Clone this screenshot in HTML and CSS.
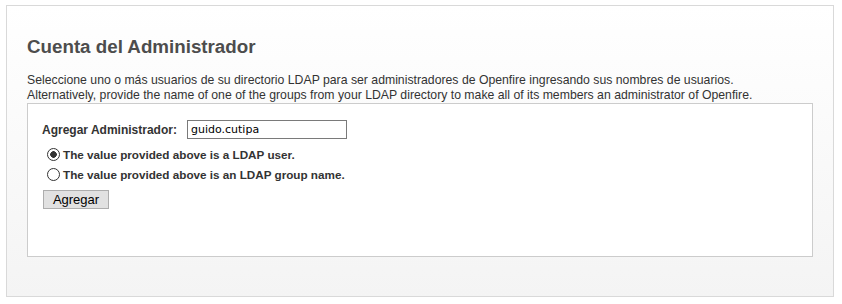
FILE: index.html
```html
<!DOCTYPE html>
<html lang="es">
<head>
    <meta charset="UTF-8">
    <title>Cuenta del Administrador</title>
    <link rel="stylesheet" href="styles.css">
</head>
<body>

    <div class="panel">
        <h1>Cuenta del Administrador</h1>
        <p class="intro">
            Seleccione uno o más usuarios de su directorio LDAP para ser administradores de Openfire ingresando sus nombres de usuarios.<br>
            Alternatively, provide the name of one of the groups from your LDAP directory to make all of its members an administrator of Openfire.
        </p>

        <div class="form-box">
            <div class="field-row">
                <label for="admin" class="field-label">Agregar Administrador:</label>
                <input type="text" id="admin" value="guido.cutipa">
            </div>
            <label class="radio-row">
                <input type="radio" name="type" value="user" checked>
                <span>The value provided above is a LDAP user.</span>
            </label>
            <label class="radio-row">
                <input type="radio" name="type" value="group">
                <span>The value provided above is an LDAP group name.</span>
            </label>
            <button type="button">Agregar</button>
        </div>
    </div>

</body>
</html>
```

FILE: styles.css
```css
body {
    margin: 0;
    background-color: #ffffff;
    font-family: "Liberation Sans", Arial, sans-serif;
    color: #333333;
}
.panel {
    box-sizing: border-box;
    height: 292px;
    margin: 5px 8px 0 6px;
    padding: 0 20px;
    border: 1px solid #d9d9d9;
    background: linear-gradient(#ffffff, #f4f4f4);
}
h1 {
    margin: 30px 0 0;
    font-size: 18.75px;
    line-height: 22px;
    font-weight: bold;
    color: #4d4d4d;
}
.intro {
    margin: 15px 0 0;
    font-size: 12.25px;
    line-height: 15px;
}
.form-box {
    display: flex;
    flex-direction: column;
    align-items: flex-start;
    margin-top: 0;
    padding: 16px 14px 47px;
    background-color: #ffffff;
    border: 1px solid #cccccc;
}
.field-row {
    display: flex;
    align-items: center;
    height: 19px;
}
.field-label {
    width: 145px;
    font-size: 12px;
    font-weight: bold;
    color: #333333;
}
.field-row input {
    box-sizing: border-box;
    width: 160px;
    height: 19px;
    margin: 0;
    padding: 0 3px;
    border: 1px solid #7a7a7a;
    font-family: "DejaVu Sans", Verdana, sans-serif;
    font-size: 11px;
    color: #000000;
}
.radio-row {
    display: flex;
    align-items: center;
    height: 20px;
    margin-left: 5px;
    font-size: 11.7px;
    font-weight: bold;
    color: #333333;
}
.field-row + .radio-row {
    margin-top: 5px;
}
.radio-row input {
    appearance: none;
    box-sizing: border-box;
    width: 13px;
    height: 13px;
    margin: 0 3px 0 0;
    border: 1px solid #333333;
    border-radius: 50%;
    background-color: #ffffff;
}
.radio-row input:checked {
    background: radial-gradient(circle, #333333 0, #333333 3px, #ffffff 3.6px);
}
button {
    box-sizing: border-box;
    width: 66px;
    height: 19px;
    margin: 6px 0 0 1px;
    padding: 0;
    border: 1px solid #adadad;
    background-color: #e1e1e1;
    font-family: "Liberation Sans", Arial, sans-serif;
    font-size: 13px;
    color: #000000;
}
```
